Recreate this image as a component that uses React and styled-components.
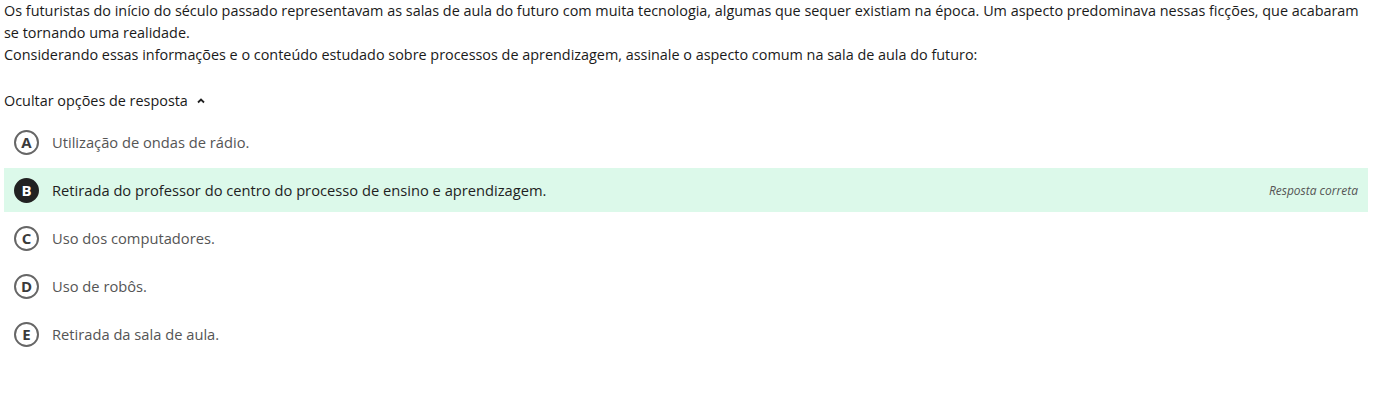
import React from 'react';
import styled, { createGlobalStyle } from 'styled-components';

const Global = createGlobalStyle`
  body {
    margin: 0;
    background: #fff;
    font-family: "Open Sans", "Noto Sans", sans-serif;
  }
`;

const Page = styled.div`
  padding: 0 22px 0 4px;
`;

const Statement = styled.div`
  font-size: 14.4px;
  line-height: 22px;
  color: #1a1a1a;
  p { margin: 0; }
`;

const Toggle = styled.button`
  display: flex;
  align-items: center;
  gap: 8px;
  margin-top: 24px;
  padding: 0;
  border: 0;
  background: none;
  font-family: inherit;
  font-size: 14.4px;
  line-height: 22px;
  color: #1a1a1a;
  cursor: pointer;
`;

const List = styled.div`
  display: flex;
  flex-direction: column;
  gap: 4px;
  margin-top: 8px;
`;

const Row = styled.div`
  display: flex;
  align-items: center;
  height: 44px;
  padding: 0 10px;
  background: ${p => (p.$correct ? '#dcf9ea' : 'transparent')};
`;

const Badge = styled.span`
  box-sizing: border-box;
  width: 25px;
  height: 25px;
  border-radius: 50%;
  border: 2px solid ${p => (p.$filled ? '#222' : '#666')};
  background: ${p => (p.$filled ? '#222' : '#fff')};
  color: ${p => (p.$filled ? '#fff' : '#3a3a3a')};
  display: flex;
  align-items: center;
  justify-content: center;
  font-size: 15px;
  font-weight: 700;
  flex: none;
`;

const Label = styled.span`
  margin-left: 13px;
  font-size: 14.7px;
  color: ${p => (p.$correct ? '#1f1f1f' : '#555')};
  flex: 1;
`;

const Note = styled.span`
  font-size: 12px;
  font-style: italic;
  color: #555;
`;

const options = [
  ['A', 'Utilização de ondas de rádio.'],
  ['B', 'Retirada do professor do centro do processo de ensino e aprendizagem.', true],
  ['C', 'Uso dos computadores.'],
  ['D', 'Uso de robôs.'],
  ['E', 'Retirada da sala de aula.'],
];

export default function App() {
  return (
    <Page>
      <Global />
      <Statement>
        <p>
          Os futuristas do início do século passado representavam as salas de aula do futuro com muita tecnologia, algumas que sequer existiam na época. Um aspecto predominava nessas ficções, que acabaram se tornando uma realidade.
        </p>
        <p>
          Considerando essas informações e o conteúdo estudado sobre processos de aprendizagem, assinale o aspecto comum na sala de aula do futuro:
        </p>
      </Statement>
      <Toggle>
        Ocultar opções de resposta
        <svg width="10" height="10" viewBox="0 0 10 10">
          <path d="M2 6.5 L5 3.5 L8 6.5" fill="none" stroke="#222" strokeWidth="1.8" />
        </svg>
      </Toggle>
      <List>
        {options.map(([letter, text, correct]) => (
          <Row key={letter} $correct={correct}>
            <Badge $filled={correct}>{letter}</Badge>
            <Label $correct={correct}>{text}</Label>
            {correct && <Note>Resposta correta</Note>}
          </Row>
        ))}
      </List>
    </Page>
  );
}
